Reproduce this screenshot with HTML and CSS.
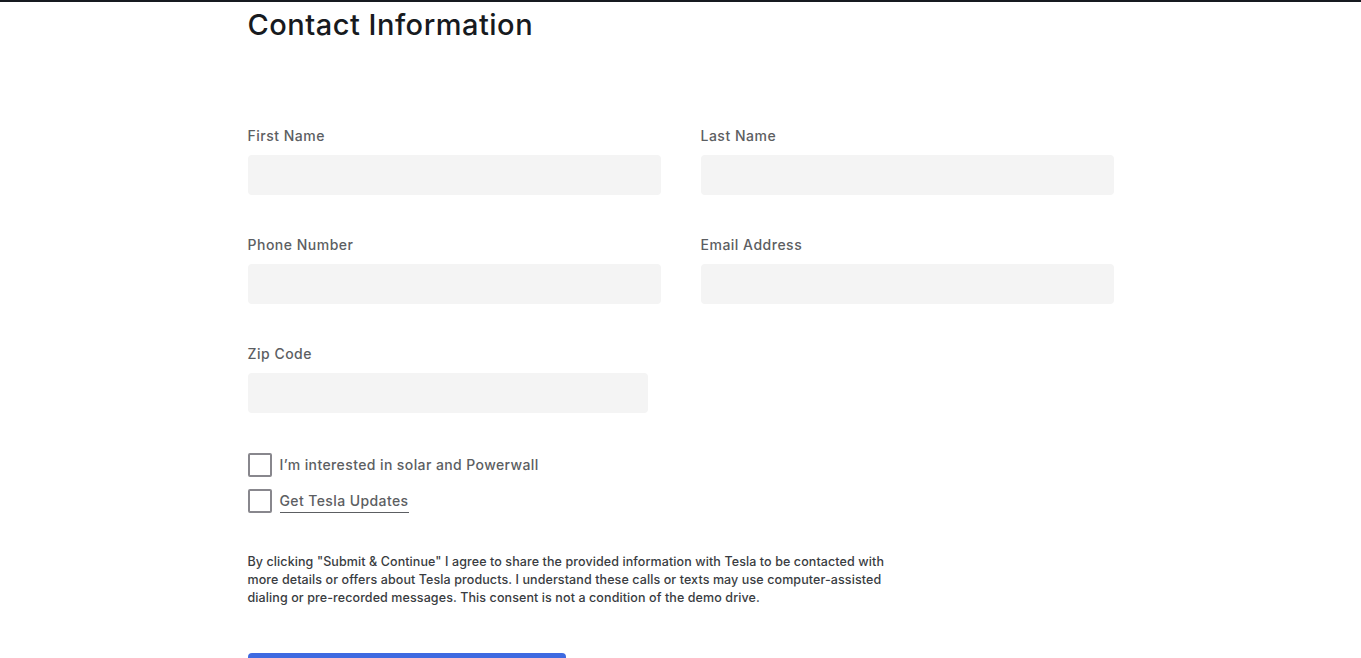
FILE: index.html
```html
<!DOCTYPE html>
<html lang="en">
<head>
<meta charset="utf-8">
<title>Contact Information</title>
<link rel="stylesheet" href="styles.css">
</head>
<body>
<div class="topbar"></div>
<main class="page">
  <h1 class="title">Contact Information</h1>
  <form class="form">
    <div class="grid">
      <div class="field">
        <label class="label" for="first">First Name</label>
        <input class="input" id="first" type="text">
      </div>
      <div class="field">
        <label class="label" for="last">Last Name</label>
        <input class="input" id="last" type="text">
      </div>
      <div class="field">
        <label class="label" for="phone">Phone Number</label>
        <input class="input" id="phone" type="tel">
      </div>
      <div class="field">
        <label class="label" for="email">Email Address</label>
        <input class="input" id="email" type="email">
      </div>
      <div class="field field-zip">
        <label class="label" for="zip">Zip Code</label>
        <input class="input" id="zip" type="text">
      </div>
    </div>
    <div class="checks">
      <label class="check">
        <span class="box"></span>
        <span class="check-text">I’m interested in solar and Powerwall</span>
      </label>
      <label class="check">
        <span class="box"></span>
        <span class="check-text check-link">Get Tesla Updates</span>
      </label>
    </div>
    <p class="legal">By clicking "Submit &amp; Continue" I agree to share the provided information with Tesla to be contacted with more details or offers about Tesla products. I understand these calls or texts may use computer-assisted dialing or pre-recorded messages. This consent is not a condition of the demo drive.</p>
    <button class="submit" type="button">Submit &amp; Continue</button>
  </form>
</main>
</body>
</html>
```

FILE: styles.css
```css
* { box-sizing: border-box; }
html, body { margin: 0; padding: 0; background: #fff; }
body {
  font-family: "Inter", "Noto Sans", "Liberation Sans", sans-serif;
  color: #393c41;
  overflow: hidden;
}
.topbar { height: 2px; background: #171a20; }
.page {
  width: 866px;
  margin: 0 auto;
}
.title {
  margin: 0;
  padding-top: 4px;
  font-size: 29px;
  line-height: 38px;
  font-weight: 500;
  color: #171a20;
  letter-spacing: 0.5px;
}
.form { padding-top: 82px; }
.grid {
  display: grid;
  grid-template-columns: 413px 413px;
  column-gap: 40px;
  row-gap: 40px;
}
.field { display: flex; flex-direction: column; }
.field-zip .input { width: 400px; }
.label {
  font-size: 14px;
  line-height: 20px;
  font-weight: 500;
  color: #5c5e62;
  margin-bottom: 9px;
  letter-spacing: 0.5px;
}
.input {
  height: 40px;
  border: 0;
  border-radius: 4px;
  background: #f4f4f4;
  outline: none;
}
.checks {
  padding-top: 40px;
  display: flex;
  flex-direction: column;
  gap: 12px;
}
.check {
  display: flex;
  align-items: center;
  gap: 8px;
  height: 24px;
}
.box {
  width: 24px;
  height: 24px;
  border: 2px solid #88878d;
  border-radius: 2px;
  flex: none;
}
.check-text {
  font-size: 14px;
  line-height: 20px;
  font-weight: 500;
  color: #5c5e62;
  letter-spacing: 0.4px;
  margin-top: -1px;
}
.check-link {
  border-bottom: 1px solid #5c5e62;
  line-height: 22px;
  align-self: flex-end;
  margin-top: 0;
}
.legal {
  margin: 40px 0 0;
  max-width: 645px;
  font-size: 12.5px;
  line-height: 18px;
  font-weight: 500;
  color: #393c41;
  letter-spacing: 0.1px;
}
.submit {
  display: block;
  margin-top: 46px;
  width: 318px;
  height: 40px;
  border: 0;
  border-radius: 4px;
  background: #3e6ae1;
  color: #fff;
  font: inherit;
  font-size: 14px;
  font-weight: 500;
}
```
